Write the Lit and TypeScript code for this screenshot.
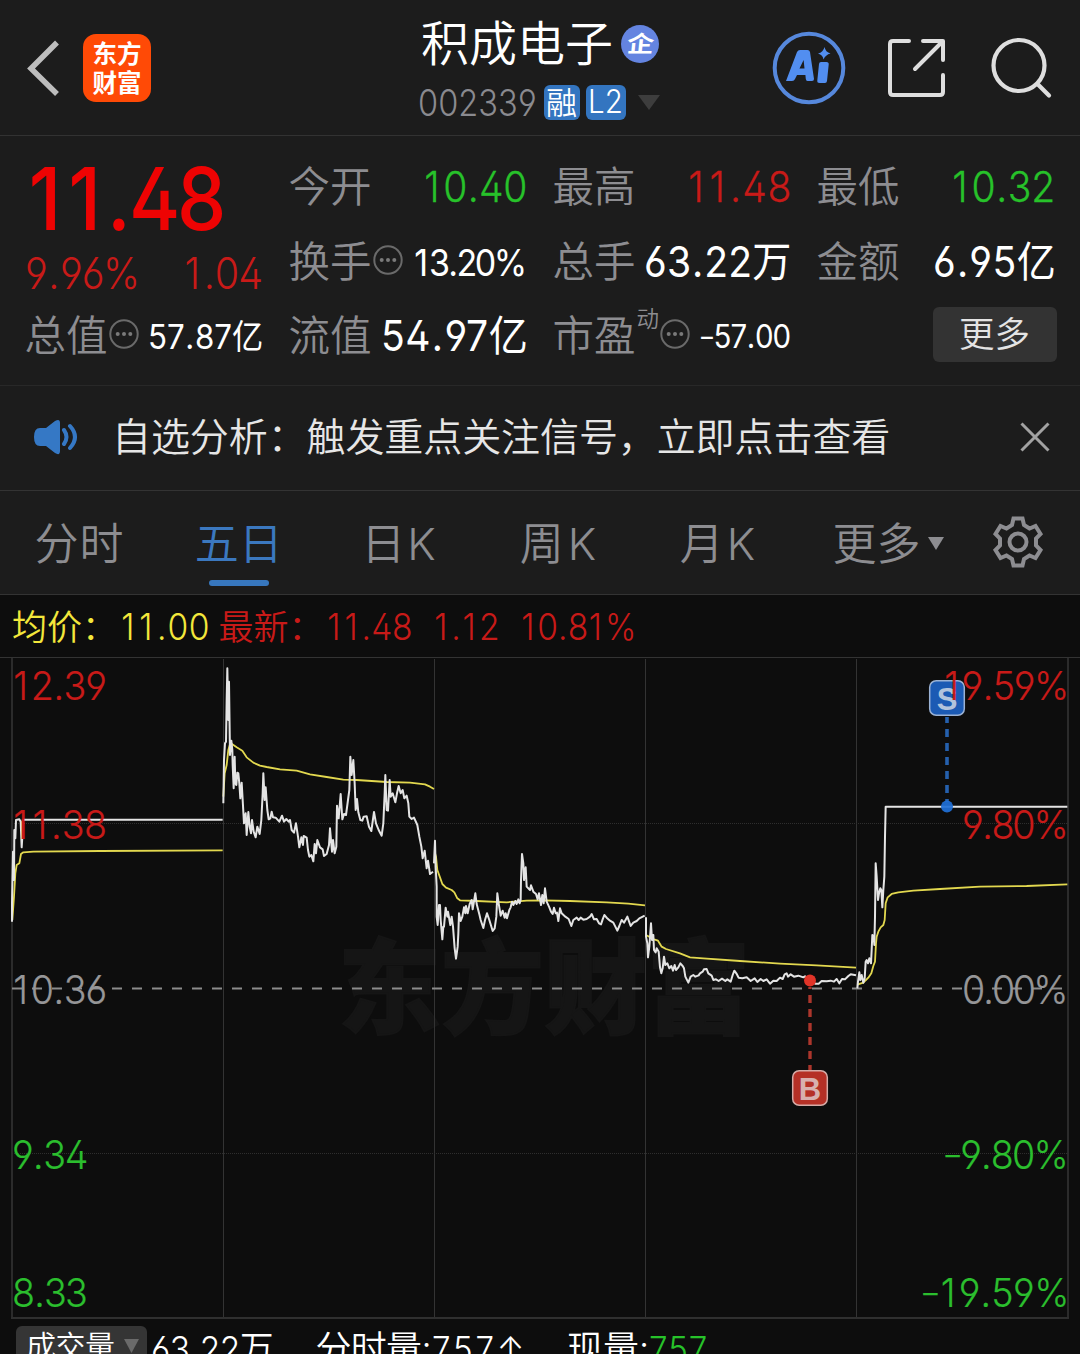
import { LitElement, html, css, svg } from "lit";
import { customElement, property } from "lit/decorators.js";

/** Text run condensed by `k` and tracked so that it spans the width `w`. */
@customElement("fit-text")
class FitText extends LitElement {
  @property({ type: String }) text = "";
  @property({ type: Number }) w = 0;
  @property({ type: Number }) k = 1;

  static styles = css`
    :host {
      display: inline-block;
      white-space: nowrap;
      flex: none;
    }
    .run {
      display: inline-block;
      white-space: pre;
      transform-origin: left center;
    }
    .one { margin: 0 0.1em 0 0.035em; }
    .dot { margin: 0 0.02em; }
    .minus { display: inline-block; transform: translateX(-0.03em) scale(1.25, 0.85); }
  `;

  updated() {
    const run = this.renderRoot.querySelector(".run") as HTMLElement;
    run.style.letterSpacing = "0px";
    const target = this.w / this.k;
    const step = (target - run.offsetWidth) / Math.max(1, this.text.length - 1);
    run.style.letterSpacing = `${step}px`;
    run.style.transform = this.k === 1 ? "none" : `scaleX(${this.k})`;
    run.style.marginRight = `${this.w - target - step}px`;
  }

  private glyph(c: string) {
    if (c === "1") return html`<span class="one">1</span>`;
    if (c === ".") return html`<span class="dot">.</span>`;
    if (c === "-") return html`<span class="minus">-</span>`;
    return c;
  }

  render() {
    return html`<span class="run">${[...this.text].map((c) => this.glyph(c))}</span>`;
  }
}

const t = (text: string, w: number, cls = "") =>
  html`<fit-text class=${cls} .text=${text} .w=${w}></fit-text>`;
const n = (text: string, w: number, cls = "", k = 0.92) =>
  html`<fit-text class=${cls} .text=${text} .w=${w} .k=${k}></fit-text>`;

const more = html`<svg class="dots" width="30" height="30" viewBox="0 0 30 30">
  <circle cx="15" cy="15" r="13.7" fill="none" stroke="#6a6a6a" stroke-width="2" />
  <circle cx="8.7" cy="15" r="2" fill="#7a7a7a" />
  <circle cx="15" cy="15" r="2" fill="#7a7a7a" />
  <circle cx="21.3" cy="15" r="2" fill="#7a7a7a" />
</svg>`;

interface Session {
  x: number;
  y: number;
  price: string;
  avg: string;
}

// Points are in thirds of a pixel, relative to each session's origin.
const sessions: Session[] = [
  {
    x: 0, y: 650,
    price: "36,815 36,760 39,605 42,690 43,540 46,565 48,510 58,508 62,515 65,592 67,560 68,510 72,509 668,509",
    avg: "37,810 42,740 46,670 50,645 58,640 63,612 70,607 100,605 300,603 668,601",
  },
  {
    x: 210, y: 650,
    price: "40,460 42,330 45,280 48,275 50,150 52,55 55,210 57,95 60,315 64,272 67,300 68,345 71,415 74,320 76,400 79,405 82,368 85,370 88,400 91,445 95,398 98,450 102,520 107,490 110,555 115,486 119,530 123,550 126,510 131,545 137,562 142,530 149,552 154,510 158,430 160,370 164,450 167,412 172,480 176,508 181,505 185,485 189,502 197,503 208,515 216,497 222,515 229,507 236,515 240,510 245,540 252,548 258,520 264,560 268,592 274,562 279,585 281,558 290,563 294,600 298,620 304,615 310,634 314,582 318,610 322,570 330,592 338,598 342,618 350,612 357,585 360,535 366,605 369,570 374,610 379,590 381,467 386,505 392,432 397,508 402,492 408,495 414,450 418,420 421,320 425,375 430,330 434,400 437,480 441,447 445,487 451,510 457,512 461,500 470,499 477,530 484,543 492,486 498,520 506,540 515,557 520,520 524,430 526,375 530,480 534,482 539,390 542,440 548,430 556,457 561,430 566,408 572,430 578,420 583,445 590,437 595,460 598,500 605,507 612,503 622,525 628,560 634,590 638,625 644,602 650,655 654,632 660,672 669,665",
    avg: "40,440 44,370 50,345 55,300 60,283 66,282 80,292 97,302 110,322 130,338 150,347 170,351 210,358 260,362 300,373 350,381 400,389 440,390 530,396 600,398 645,403 660,410 672,417",
  },
  {
    x: 420, y: 820,
    price: "42,130 45,62 47,140 50,200 50,290 53,315 57,255 60,255 62,300 67,358 70,320 72,320 77,263 82,290 84,275 91,315 95,290 99,320 104,385 108,416 113,380 115,340 117,280 122,303 127,290 132,262 136,280 138,258 143,280 149,252 155,240 158,268 166,220 170,252 178,283 182,300 190,324 195,300 201,280 208,300 218,333 224,325 229,290 232,220 236,250 242,287 248,272 254,293 257,280 261,295 268,270 272,262 276,245 280,255 286,243 290,252 295,238 299,250 302,240 303,180 306,102 310,130 312,180 317,142 320,200 330,210 333,196 340,215 348,222 353,238 357,220 363,255 367,225 371,250 375,205 380,245 388,262 393,275 398,282 402,263 407,280 411,278 415,303 420,265 425,280 436,290 446,297 454,318 460,300 470,293 476,300 482,293 490,299 500,297 510,290 515,282 522,298 530,297 537,310 543,313 548,298 553,285 560,293 570,302 580,308 592,332 598,318 605,300 612,308 622,290 632,318 640,308 650,303 658,295 674,287",
    avg: "45,100 48,110 52,150 60,172 67,192 78,203 95,210 103,217 112,235 120,241 170,243 260,247 320,242 370,241 450,243 560,247 625,251 675,256",
  },
  {
    x: 630, y: 880,
    price: "48,112 48,170 52,190 54,232 58,200 63,130 66,180 70,165 72,210 77,217 80,205 86,215 90,262 94,280 98,265 102,230 106,255 112,250 118,265 124,258 129,272 134,255 138,270 145,262 151,250 158,258 162,265 166,290 175,308 182,290 190,285 196,290 206,286 210,280 218,275 222,268 230,267 235,280 245,287 250,300 258,298 266,303 276,296 286,303 292,298 302,305 308,285 313,272 319,280 326,293 337,295 350,292 362,303 374,295 382,306 392,297 400,303 410,298 420,311 430,302 440,303 450,293 458,297 464,283 470,280 474,290 482,283 492,290 505,287 520,292 525,289 535,298 545,300 555,311 566,311 575,303 590,304 602,302 612,305 620,297 628,310 636,297 645,298 655,288 662,283 678,286",
    avg: "48,165 60,172 72,178 84,182 95,200 108,207 150,220 180,232 220,235 330,243 450,251 560,256 678,263",
  },
  {
    x: 840, y: 650,
    price: "52,1015 54,995 58,967 61,990 65,975 70,998 74,985 77,935 80,930 84,940 88,925 93,940 95,900 97,855 101,860 103,885 105,800 107,640 110,680 114,750 117,730 121,715 124,720 127,772 130,720 133,680 135,560 137,470 682,470",
    avg: "52,1004 70,998 85,983 94,970 100,948 105,935 108,880 110,860 115,845 122,832 130,825 134,810 137,760 143,742 155,732 175,727 220,722 300,717 420,710 560,708 682,703",
  },
];

interface Level {
  top: number;
  price: string;
  pw: number;
  pct: string;
  cw: number;
  tone: string;
}

const levels: Level[] = [
  { top: 8, price: "12.39", pw: 95, pct: "19.59%", cw: 126, tone: "up" },
  { top: 147, price: "11.38", pw: 95, pct: "9.80%", cw: 107, tone: "up" },
  { top: 312, price: "10.36", pw: 95, pct: "0.00%", cw: 107, tone: "mid" },
  { top: 477, price: "9.34", pw: 76, pct: "-9.80%", cw: 124, tone: "down" },
  { top: 615, price: "8.33", pw: 76, pct: "-19.59%", cw: 146, tone: "down" },
];

@customElement("trend-chart")
class TrendChart extends LitElement {
  static styles = css`
    :host {
      display: block;
      position: relative;
      height: 662px;
    }
    .plot {
      display: block;
    }
    .mark {
      font: 900 103px "Noto Sans CJK SC", sans-serif;
      fill: #151515;
      stroke: #151515;
      stroke-width: 2;
    }
    .line {
      fill: none;
      stroke-width: 2;
      stroke-linejoin: round;
      vector-effect: non-scaling-stroke;
    }
    .price { stroke: #e4e4e4; }
    .avg { stroke: #e2d84f; stroke-width: 1.8; }
    .level {
      position: absolute;
      left: 12px;
      right: 11px;
      display: flex;
      justify-content: space-between;
      font: 350 40px/42px Inter, "Noto Sans CJK SC", sans-serif;
      -webkit-text-stroke: 0.2px;
      font-feature-settings: "cv02", "cv03", "cv04";
    }
    .up { color: #c81a18; }
    .down { color: #2bbe2e; }
    .mid { color: #969698; }
    .tag {
      font: 700 31px "Liberation Sans", Arial, sans-serif;
      text-anchor: middle;
    }
  `;

  render() {
    return html`<svg class="plot" width="1080" height="662" viewBox="0 657 1080 662">
      <text class="mark" x="338" y="1026" textLength="412" lengthAdjust="spacing">东方财富</text>
      <path d="M0 657.5H1080" stroke="#333" />
      <path d="M12 658V1318M1068 658V1318" stroke="#2b2b2b" stroke-width="2" />
      <path d="M223.5 659V1317M434.5 659V1317M645.5 659V1317M856.5 659V1317" stroke="#333" />
      <path d="M12 823.5H1068M12 1153.5H1068" stroke="#2e2e2e" stroke-dasharray="1 1" />
      <path d="M11 1318H1069" stroke="#2f2f2f" stroke-width="2" />
      <path d="M12 988.5H1068" stroke="#8c8c8c" stroke-width="2" stroke-dasharray="10 10" />
      ${sessions.map(
        (s) => svg`<g transform="translate(${s.x} ${s.y}) scale(0.33333)">
          <polyline class="line avg" points=${s.avg} />
          <polyline class="line price" points=${s.price} />
        </g>`
      )}
      <path d="M947 717V802" stroke="#2560ad" stroke-width="3.6" stroke-dasharray="8 6" stroke-dashoffset="2" />
      <circle cx="947" cy="806.5" r="6" fill="#2070d8" opacity=".92" />
      <rect x="929.7" y="680.7" width="34.6" height="34.6" rx="6.5" fill="#1b5ab4" stroke="#9bb2d4" stroke-width="1.5" />
      <text class="tag" x="947" y="710" fill="#b2c3dc">S</text>
      <path d="M810 987V1070" stroke="#ac362c" stroke-width="3.4" stroke-dasharray="8 6" stroke-dashoffset="6" />
      <circle cx="810" cy="980.5" r="6" fill="#e03428" />
      <rect x="792.7" y="1070.7" width="34.6" height="34.6" rx="6.5" fill="#b53026" stroke="#d5aaa6" stroke-width="1.5" />
      <text class="tag" x="810" y="1099.5" fill="#d8b0ae">B</text>
    </svg>
    ${levels.map(
      (l) => html`<div class="level ${l.tone}" style="top:${l.top}px">
        ${n(l.price, l.pw, "", 0.94)}${n(l.pct, l.cw, "", 0.94)}
      </div>`
    )}`;
  }
}

@customElement("app-root")
class AppRoot extends LitElement {
  static styles = css`
    :host {
      display: flex;
      flex-direction: column;
      width: 1080px;
      height: 1354px;
      overflow: hidden;
      background: #0d0d0d;
      color: #fff;
      font-family: Inter, "Noto Sans CJK SC", sans-serif;
      font-feature-settings: "cv02", "cv03", "cv04";
      font-weight: 350;
      line-height: 1;
    }
    * { box-sizing: border-box; }
    svg { display: block; flex: none; }
    .bar { background: #1c1c1c; flex: none; }

    .header {
      height: 136px;
      border-bottom: 1px solid #323232;
      display: grid;
      grid-template-columns: 418px 244px 1fr;
    }
    .lead { display: flex; align-items: center; gap: 23px; padding-left: 26px; }
    .logo {
      width: 68px;
      height: 68px;
      border-radius: 13px;
      background: #ff4a06;
      display: flex;
      flex-direction: column;
      align-items: center;
      justify-content: center;
      gap: 4px;
      padding-bottom: 2px;
      font: 700 24.5px/25px "Noto Sans CJK SC", sans-serif;
    }
    .title { display: flex; flex-direction: column; }
    .name {
      display: flex;
      align-items: center;
      gap: 8px;
      height: 76px;
      padding: 12px 0 0 3px;
      font-size: 48px;
    }
    .ent {
      width: 38px;
      height: 38px;
      border-radius: 50%;
      background: #6484e0;
      display: grid;
      place-items: center;
      font-size: 27px;
      font-weight: 700;
    }
    .flat { transform: scaleY(0.84) skewX(-5deg); }
    .sub { display: flex; align-items: center; height: 52px; color: #8a8a8f; }
    .code { margin-right: 7px; font-size: 37px; }
    .chip {
      height: 35px;
      border-radius: 6px;
      background: #3375c0;
      color: #fff;
      display: grid;
      place-items: center;
      font-size: 31px;
      margin-right: 6px;
    }
    .rong { width: 36px; }
    .l2 { width: 40px; margin-right: 12px; font-size: 32px; }
    .tools { display: flex; align-items: center; padding-left: 109.5px; }

    .stats {
      height: 250px;
      border-bottom: 1px solid #282828;
      padding: 14px 24px 12px 24.5px;
      display: grid;
      grid-template-columns: repeat(4, 239px);
      column-gap: 25px;
    }
    .col { display: grid; grid-template-rows: 75px 75px 73px; }
    .first { grid-template-rows: 97px 53px 73px; }
    .cell { display: flex; align-items: center; justify-content: space-between; }
    .label { display: flex; align-items: center; font-size: 41.5px; color: #8d8d91; gap: 1px; }
    .dots { margin-top: -5px; }
    .big { font-size: 87px; font-weight: 500; color: #ee0303; padding-left: 1px; }
    .v { font-size: 42.5px; -webkit-text-stroke: 0.3px; }
    .chg { font-size: 43px; }
    .m { font-size: 37px; font-weight: 400; }
    .s { font-size: 34px; font-weight: 400; }
    .xs { font-size: 32px; font-weight: 400; }
    .w { font-weight: 400; -webkit-text-stroke: 0; }
    .red { color: #c81a18; }
    .green { color: #27c22a; }
    .sup { font-size: 22.5px; align-self: flex-start; margin-top: -8px; }
    .btn {
      width: 124px;
      height: 55px;
      margin: 0 -1px 4px auto;
      border-radius: 6px;
      background: #333;
      color: #e4e4e4;
      display: grid;
      place-items: center;
      font-size: 35.5px;
    }

    .notice {
      height: 105px;
      border-bottom: 1px solid #333;
      display: flex;
      align-items: center;
      padding: 0 30px 2px 33px;
      color: #e6e6e6;
      font-size: 39px;
    }
    .msg { margin: -2px 0 0 33px; flex: 1; }

    .tabs {
      height: 104px;
      border-bottom: 1px solid #333;
      display: flex;
      color: #8d8d91;
      font-size: 44px;
    }
    .tab {
      width: 159.6px;
      display: flex;
      flex-direction: column;
      align-items: center;
      padding-top: 31px;
    }
    .tab:first-child { width: 159px; padding-right: 1px; }
    .on { color: #3b78bf; }
    .ink { width: 60px; height: 6px; border-radius: 3px; background: #3777be; margin-top: 14px; }
    .drop { display: flex; align-items: center; gap: 8px; padding: 2px 0 0 35px; }
    .gear { margin: 25px 0 0 48px; }

    .quote {
      height: 62px;
      flex: none;
      display: flex;
      align-items: center;
      padding: 2px 0 0 12px;
      font-size: 36.5px;
    }
    .cj { font-size: 35px; margin-right: 3px; }
    .now { margin-left: 9px; }
    .gap { margin-left: 20px; }
    .yellow { color: #f3e73b; }

    .foot {
      display: flex;
      align-items: flex-start;
      height: 35px;
      flex: none;
      padding-left: 16px;
      overflow: hidden;
      font-size: 36px;
    }
    .pick {
      display: flex;
      align-items: center;
      gap: 9px;
      width: 131px;
      height: 46px;
      margin: 7px 4px 0 0;
      padding: 0 0 7px 10px;
      border-radius: 6px;
      background: #353535;
      font-size: 30px;
      flex: none;
    }
    .f { margin-top: 12px; }
    .min { margin-left: 42px; }
    .cur { margin-left: 43px; }
    .share { margin-left: 41px; }
    .search { margin-left: 43px; }
  `;

  private tab(text: string, w: number, on = false) {
    return html`<div class="tab ${on ? "on" : ""}">
      ${t(text, w)}${on ? html`<div class="ink"></div>` : ""}
    </div>`;
  }

  render() {
    return html`
      <div class="bar header">
        <div class="lead">
          <svg width="34" height="58" viewBox="0 0 34 58">
            <path d="M31 3.5L5 29.5L31 55" fill="none" stroke="#bdbdbd" stroke-width="5.5" />
          </svg>
          <div class="logo"><span>东方</span><span>财富</span></div>
        </div>
        <div class="title">
          <div class="name">${t("积成电子", 192)}<span class="ent"><span class="flat">企</span></span></div>
          <div class="sub">
            ${n("002339", 119, "code", 0.88)}
            <span class="chip rong">融</span>
            <span class="chip l2">${n("L2", 35)}</span>
            <svg width="22" height="15" viewBox="0 0 22 15"><path d="M0 0H22L11 15Z" fill="#3d3d3d" /></svg>
          </div>
        </div>
        <div class="tools">
          <svg width="74" height="74" viewBox="0 0 74 74" fill="#528ef0">
            <circle cx="37" cy="37" r="34.3" fill="none" stroke="#5688dc" stroke-width="4" />
            <path fill-rule="evenodd" d="M14 50L25 21Q26 19 28 19H35.500Q37.500 19 38 21L42 48Q42 50 40 50H35.500Q34 50 33.800 48L33.400 44H25L23 48Q22.300 50 20 50ZM27.500 37.500H32.500L31.600 29Z" />
            <path d="M49 31H54.500Q57 31 56.700 33.500L55 50Q54.700 52 53 52H47.500Q45 52 45.300 49.500L47 33Q47.200 31 49 31Z" />
            <path d="M52.500 16Q53.500 21 58.500 22.500Q53.500 23.800 51.500 28.500Q51 24 46 22.500Q51.300 21.300 52.500 16Z" />
          </svg>
          <svg class="share" width="60" height="60" viewBox="0 0 60 60" fill="none" stroke="#dedede" stroke-width="4" stroke-linecap="round" stroke-linejoin="round">
            <path d="M22 3H6Q3 3 3 6V54Q3 57 6 57H53Q56 57 56 54V37M36 3H56V22M55 4L28 31" />
          </svg>
          <svg class="search" width="62" height="62" viewBox="0 0 62 62" fill="none" stroke="#dedede" stroke-width="4.200" stroke-linecap="round">
            <circle cx="29" cy="28.500" r="25.500" /><path d="M47.500 47L59 58.500" />
          </svg>
        </div>
      </div>

      <div class="bar stats">
        <div class="col first">
          <div class="cell big">${n("11.48", 200, "", 0.9)}</div>
          <div class="cell red chg">${n("9.96%", 115)}${n("1.04", 80)}</div>
          <div class="cell"><span class="label">总值${more}</span>${n("57.87亿", 115, "s")}</div>
        </div>
        <div class="col">
          <div class="cell"><span class="label">今开</span>${n("10.40", 104, "v green")}</div>
          <div class="cell"><span class="label">换手${more}</span>${n("13.20%", 114, "m")}</div>
          <div class="cell"><span class="label">流值</span>${n("54.97亿", 147, "v w")}</div>
        </div>
        <div class="col">
          <div class="cell"><span class="label">最高</span>${n("11.48", 104, "v red")}</div>
          <div class="cell"><span class="label">总手</span>${n("63.22万", 147, "v w")}</div>
          <div class="cell"><span class="label">市盈<span class="sup">动</span>${more}</span>${n("-57.00", 90, "xs")}</div>
        </div>
        <div class="col">
          <div class="cell"><span class="label">最低</span>${n("10.32", 104, "v green")}</div>
          <div class="cell"><span class="label">金额</span>${n("6.95亿", 123, "v w")}</div>
          <div class="cell"><span class="btn">更多</span></div>
        </div>
      </div>

      <div class="bar notice">
        <svg width="46" height="36" viewBox="0 0 46 36">
          <path d="M7 9H13L22 2Q27 -1 27 4V32Q27 37 22 34L13 27H7Q1 27 1 18Q1 9 7 9Z" fill="#3578c5" />
          <path d="M31 11Q36 18 31 25M37 7Q47 18 37 29" fill="none" stroke="#3578c5" stroke-width="4" stroke-linecap="round" />
        </svg>
        <span class="msg">${t("自选分析：触发重点关注信号，立即点击查看", 778)}</span>
        <svg width="30" height="30" viewBox="0 0 30 30"><path d="M1.500 1.500L28.500 28.500M28.500 1.500L1.500 28.500" stroke="#a2a2a2" stroke-width="3" /></svg>
      </div>

      <div class="bar tabs">
        ${this.tab("分时", 89)}${this.tab("五日", 88, true)}${this.tab("日K", 74)}${this.tab("周K", 76)}${this.tab("月K", 75)}
        <div class="drop">
          ${t("更多", 88)}
          <svg width="16" height="13" viewBox="0 0 16 13"><path d="M0 0H16L8 13Z" fill="#8d8d91" /></svg>
        </div>
        <svg class="gear" width="52" height="52" viewBox="0 0 52 52" fill="none" stroke="#8d8d91" stroke-width="4">
          <circle cx="26" cy="26" r="8.500" />
          <path d="M21.500 2.500H30.500L32 9L37.500 12.500L43.500 10L48.500 18L44 22.500V29.500L48.500 34L43.500 42L37.500 39.500L32 43L30.500 49.500H21.500L20 43L14.500 39.500L8.500 42L3.500 34L8 29.500V22.500L3.500 18L8.500 10L14.500 12.500L20 9Z" />
        </svg>
      </div>

      <div class="quote">
        <span class="yellow cj">均价：</span>${n("11.00", 89, "yellow")}
        <span class="red cj now">最新：</span>
        ${n("11.48", 87, "red")}
        ${n("1.12", 67, "red gap")}
        ${n("10.81%", 116, "red gap")}
      </div>

      <trend-chart></trend-chart>

      <div class="foot">
        <div class="pick">${t("成交量", 89)}<svg width="15" height="14" viewBox="0 0 15 14"><path d="M0 0H15L7.500 14Z" fill="#6a6a6a" /></svg></div>
        <div class="f">${n("63.22万", 122, "", 0.93)}</div>
        <div class="f min">${t("分时量:", 116)}${n("757↑", 92)}</div>
        <div class="f cur">${t("现量:", 82)}</div>
        <div class="f green">${n("757", 58)}</div>
      </div>
    `;
  }
}
